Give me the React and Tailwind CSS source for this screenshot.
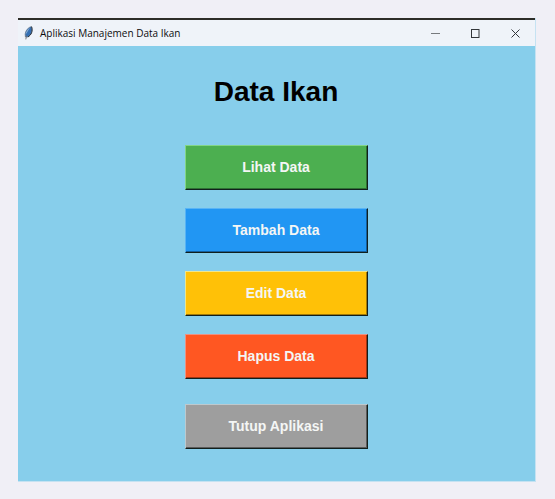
const actions = [
  { label: 'Lihat Data', tone: 'bg-[#4caf50] border-t-[#83d586] border-l-[#83d586] shadow-[inset_-1px_-1px_0_#2f7034]' },
  { label: 'Tambah Data', tone: 'bg-[#2196f3] border-t-[#58b4f5] border-l-[#58b4f5] shadow-[inset_-1px_-1px_0_#155f9c]' },
  { label: 'Edit Data', tone: 'bg-[#ffc107] border-t-[#efe68a] border-l-[#efe68a] shadow-[inset_-1px_-1px_0_#a07a08]' },
  { label: 'Hapus Data', tone: 'bg-[#ff5722] border-t-[#eb9284] border-l-[#eb9284] shadow-[inset_-1px_-1px_0_#a03616]' },
];

function ActionButton({ label, tone }) {
  return (
    <button
      type="button"
      className={`h-[45px] w-[183px] border border-r-[#111f1c] border-b-[#111f1c] pb-0.5 text-sm font-bold text-[#f4f6f5] ${tone}`}
    >
      {label}
    </button>
  );
}

function Feather() {
  return (
    <svg viewBox="0 0 10 14" className="h-3.5 w-2.5" aria-hidden="true">
      <path d="M7.4 0.5 C4.4 1.2 1.4 4.6 1.1 8 L1.4 11 L3.6 10.9 C7.4 9 9 5 7.4 0.5 Z" fill="#3570b4" stroke="#66727e" strokeWidth="0.6" />
      <path d="M6 1.6 C3.4 3.4 1.8 6 1.6 8.6 L3.2 6.2 Z" fill="#8fb2d4" />
      <path d="M7.6 0.7 C9 5 7.4 9 3.9 11" fill="none" stroke="#2b333c" strokeWidth="1" />
      <path d="M2.6 9.6 L1.8 13.4" stroke="#6a6e74" strokeWidth="0.9" />
    </svg>
  );
}

function TitleBar() {
  return (
    <header className="flex h-7 items-center border-t-2 border-[#2d2d28] bg-[#eff3f9] pl-1.5">
      <Feather />
      <span className="ml-1.5 flex-1 font-['Open_Sans',sans-serif] text-[10px] leading-4 text-[#0c0c0e]">
        Aplikasi Manajemen Data Ikan
      </span>
      <div className="flex h-full text-[#33363a]">
        <button type="button" aria-label="Minimize" className="grid w-10 place-items-center">
          <svg viewBox="0 0 9 9" className="size-[9px]"><path d="M0 4.5H9" stroke="#777a7e" /></svg>
        </button>
        <button type="button" aria-label="Maximize" className="grid w-10 place-items-center">
          <svg viewBox="0 0 9 9" className="size-[9px]"><rect x="0.5" y="0.5" width="7.5" height="8" fill="none" stroke="currentColor" /></svg>
        </button>
        <button type="button" aria-label="Close" className="grid w-10 place-items-center">
          <svg viewBox="0 0 9 9" className="size-[9px]"><path d="M0.5 0.5L8.5 8.5M8.5 0.5L0.5 8.5" stroke="currentColor" /></svg>
        </button>
      </div>
    </header>
  );
}

export default function App() {
  return (
    <div className="flex min-h-screen flex-col bg-[#f0eff6] pt-[18px] pr-[19px] pb-[17px] pl-[18px] font-['Liberation_Sans',Arial,sans-serif]">
      <div className="flex flex-1 flex-col border-r border-b border-[#c5e2f2] bg-[#87ceeb]">
        <TitleBar />
        <main className="flex flex-1 flex-col items-center pt-7 pr-px">
          <h1 className="text-[28px] leading-9 font-bold text-black">Data Ikan</h1>
          <div className="mt-[35px] flex flex-col items-center gap-[18px]">
            {actions.map((action) => (
              <ActionButton key={action.label} {...action} />
            ))}
          </div>
          <div className="mt-[25px]">
            <ActionButton
              label="Tutup Aplikasi"
              tone="bg-[#9e9e9e] border-t-[#bdc9ce] border-l-[#bdc9ce] shadow-[inset_-1px_-1px_0_#5b5b5b]"
            />
          </div>
        </main>
      </div>
    </div>
  );
}
